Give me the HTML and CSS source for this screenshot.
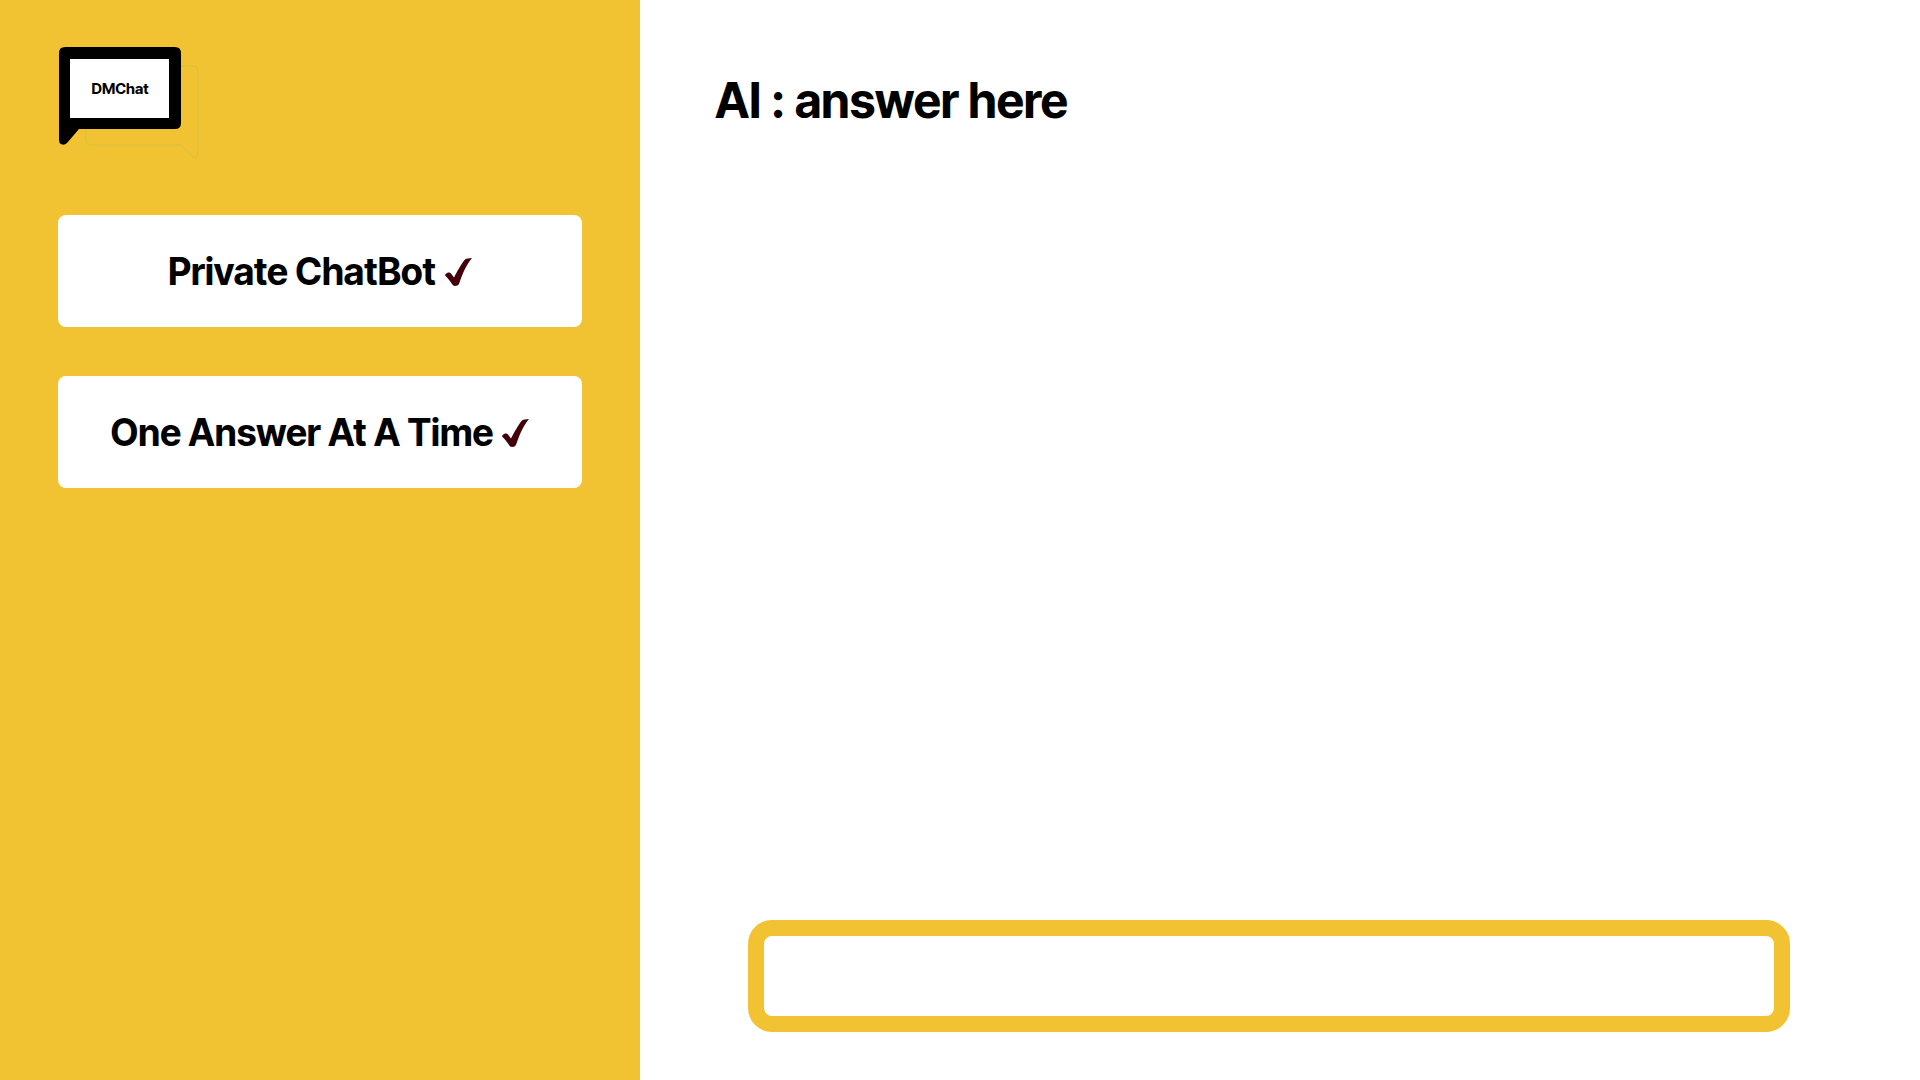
FILE: index.html
```html
<!DOCTYPE html>
<html lang="en">
<head>
<meta charset="utf-8">
<meta name="viewport" content="width=device-width, initial-scale=1">
<title>DMChat</title>
<link rel="stylesheet" href="styles.css">
</head>
<body>
<div class="app">
  <aside class="sidebar">
    <svg class="logo" viewBox="0 0 140 112" role="img" aria-label="DMChat">
      <path class="logo-shadow" d="M122 19h12q5 0 5 5v82q0 5-5 4l-12-12H32q-5 0-5-5V82"/>
      <path d="M6 0h110q6 0 6 6v70q0 6-6 6H20L8 96q-3 3-6 1-2-1-2-4V6q0-6 6-6z"/>
      <rect class="logo-screen" x="11" y="12" width="99" height="59"/>
      <text class="logo-name" x="61" y="47" text-anchor="middle">DMChat</text>
    </svg>
    <ul class="features">
      <li class="feature">Private ChatBot
        <svg class="check" viewBox="0 0 27 28" aria-hidden="true"><path d="M0 17q1-2 3-2.500 2-.5 3 1l3 4C12 14 16 6 20 1.500q2-1.500 7-1.500C20 9 17 17 14 26q-1 2-4 2-2 0-3-2C5 23 3 20 .5 18z"/></svg>
      </li>
      <li class="feature">One Answer At A Time
        <svg class="check" viewBox="0 0 27 28" aria-hidden="true"><path d="M0 17q1-2 3-2.500 2-.5 3 1l3 4C12 14 16 6 20 1.500q2-1.500 7-1.500C20 9 17 17 14 26q-1 2-4 2-2 0-3-2C5 23 3 20 .5 18z"/></svg>
      </li>
    </ul>
  </aside>
  <main class="chat">
    <h1 class="answer">AI : answer here</h1>
    <form class="composer">
      <input class="message" type="text" aria-label="Message" autocomplete="off">
    </form>
  </main>
</div>
</body>
</html>
```
FILE: styles.css
```css
* {
  box-sizing: border-box;
}

body {
  margin: 0;
  background: #fff;
  color: #000;
  font-family: "Inter Tight", Inter, "Liberation Sans", sans-serif;
  font-variant-ligatures: no-contextual;
}

.app {
  display: grid;
  grid-template-columns: 1fr 2fr;
  min-height: 100vh;
}

.sidebar {
  padding: 47px 58px;
  background: #f1c232;
}

.logo {
  display: block;
  width: 140px;
  height: 112px;
  margin-left: 1px;
}

.logo-shadow {
  fill: none;
  stroke: #b5c24a;
  stroke-opacity: 0.5;
}

.logo-screen {
  fill: #fff;
}

.logo-name {
  font-size: 15px;
  font-weight: 700;
}

.features {
  display: grid;
  gap: 49px;
  margin: 56px 0 0;
  padding: 0;
  list-style: none;
}

.feature {
  display: flex;
  align-items: center;
  justify-content: center;
  gap: 9px;
  min-height: 112px;
  padding-top: 2px;
  border-radius: 8px;
  background: #fff;
  font-size: 37px;
  font-weight: 700;
  line-height: 48px;
}

.check {
  flex: none;
  width: 27px;
  height: 28px;
  fill: #43000a;
}

.chat {
  display: flex;
  flex-direction: column;
  justify-content: space-between;
  padding: 71px 130px 48px 108px;
}

.answer {
  margin: 0 -33px;
  font-size: 48px;
  font-weight: 700;
  line-height: 60px;
}

.composer {
  display: flex;
}

.message {
  flex: 1;
  min-width: 0;
  height: 112px;
  padding: 0 24px;
  border: 16px solid #f1c232;
  border-radius: 24px;
  background: #fff;
  font: inherit;
  font-size: 32px;
}

.message:focus {
  outline: none;
  border-color: #dcae20;
}
```
